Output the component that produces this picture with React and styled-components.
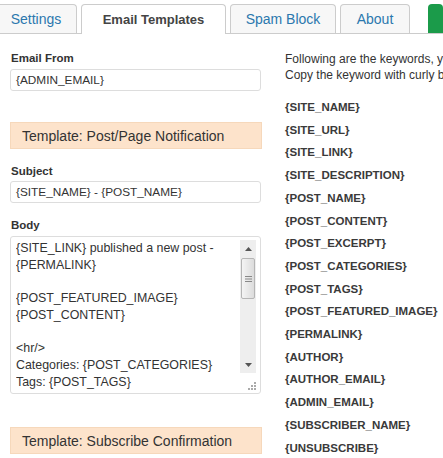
import React from 'react';
import styled, { createGlobalStyle } from 'styled-components';

const GlobalStyle = createGlobalStyle`
  html, body {
    margin: 0;
    padding: 0;
    background: #fff;
    overflow: hidden;
  }
  body {
    font-family: "Liberation Sans", Arial, sans-serif;
    color: #333;
  }
`;

const Page = styled.div`
  width: 443px;
  height: 458px;
  overflow: hidden;
  padding-top: 4px;
  box-sizing: border-box;
`;

const TabBar = styled.div`
  display: flex;
  align-items: flex-end;
  gap: 4px;
  height: 29px;
  margin-left: -5px;
  border-bottom: 1px solid #ccc;
`;

const Tab = styled.div`
  width: ${(p) => p.$w}px;
  flex: none;
  box-sizing: border-box;
  display: flex;
  align-items: center;
  justify-content: center;
  border: 1px solid #ccc;
  border-bottom: none;
  border-radius: 4px 4px 0 0;
  background: ${(p) => (p.$active ? '#fff' : '#f7f7f7')};
  color: ${(p) => (p.$active ? '#444' : '#2b77ae')};
  font-size: ${(p) => (p.$active ? '13px' : '14px')};
  font-weight: ${(p) => (p.$active ? 700 : 400)};
  margin-bottom: ${(p) => (p.$active ? '-1px' : '0')};
  height: ${(p) => (p.$active ? '30px' : '29px')};
  padding-bottom: ${(p) => (p.$active ? '1px' : '0')};
  white-space: nowrap;
`;

const GreenTab = styled.div`
  margin-left: 14px;
  width: 40px;
  height: 29px;
  background: #1b9b4a;
  border-radius: 4px 4px 0 0;
`;

const Content = styled.div`
  display: grid;
  grid-template-columns: 252px 1fr;
  column-gap: 23px;
  padding: 17px 0 0 10px;
`;

const LeftCol = styled.div`
  display: flex;
  flex-direction: column;
`;

const Label = styled.div`
  font-size: 11.5px;
  font-weight: 700;
  line-height: 15px;
  color: #333;
  padding-left: 1px;
  margin-bottom: ${(p) => p.$gap || 3}px;
`;

const Input = styled.div`
  height: 22px;
  box-sizing: border-box;
  width: 251px;
  border: 1px solid #ddd;
  border-radius: 3px;
  padding: 0 5px;
  display: flex;
  align-items: center;
  font-size: 11.8px;
  color: #333;
  margin-bottom: ${(p) => p.$after || 15}px;
`;

const TemplateHead = styled.div`
  height: 27px;
  box-sizing: border-box;
  background: #fde3cb;
  border: 1px solid #f6d8bb;
  padding-left: 11px;
  display: flex;
  align-items: center;
  font-size: 14px;
  color: #333;
  margin-bottom: 15px;
`;

const BodyBox = styled.div`
  width: 251px;
  height: 158px;
  box-sizing: border-box;
  border: 1px solid #ddd;
  border-radius: 3px;
  display: flex;
  padding: 3px 4px 1px 5px;
  margin-bottom: 33px;
`;

const BodyText = styled.div`
  flex: 1;
  white-space: pre;
  overflow: hidden;
  font-size: 12.4px;
  line-height: 16.7px;
  color: #333;
`;

const Side = styled.div`
  width: 16px;
  display: flex;
  flex-direction: column;
`;

const ScrollBar = styled.div`
  height: 133px;
  background: #eeeeee;
  display: flex;
  flex-direction: column;
  align-items: center;
`;

const Arrow = styled.div`
  height: 17px;
  width: 16px;
  display: flex;
  align-items: center;
  justify-content: center;
`;

const Track = styled.div`
  flex: 1;
  width: 100%;
  padding-top: 1px;
`;

const Thumb = styled.div`
  height: 41px;
  margin: 0 1px;
  box-sizing: border-box;
  border: 1px solid #b5b5b5;
  border-radius: 2px;
  background: linear-gradient(to right, #f4f4f4, #dcdcdc);
  display: flex;
  align-items: center;
  justify-content: center;
`;

const Grip = styled.div`
  flex: 1;
  display: flex;
  align-items: flex-end;
  justify-content: flex-end;
  padding: 0 0 2px 0;
`;

const RightCol = styled.div`
  white-space: nowrap;
  overflow: visible;
`;

const Intro = styled.p`
  margin: 0 0 13px;
  font-size: 12px;
  line-height: 16px;
  color: #333;
`;

const Keyword = styled.div`
  font-size: 11.5px;
  font-weight: 700;
  line-height: 22.7px;
  color: #3a3a3a;
`;

const keywords = [
  '{SITE_NAME}',
  '{SITE_URL}',
  '{SITE_LINK}',
  '{SITE_DESCRIPTION}',
  '{POST_NAME}',
  '{POST_CONTENT}',
  '{POST_EXCERPT}',
  '{POST_CATEGORIES}',
  '{POST_TAGS}',
  '{POST_FEATURED_IMAGE}',
  '{PERMALINK}',
  '{AUTHOR}',
  '{AUTHOR_EMAIL}',
  '{ADMIN_EMAIL}',
  '{SUBSCRIBER_NAME}',
  '{UNSUBSCRIBE}',
];

const bodyText = `{SITE_LINK} published a new post -
{PERMALINK}

{POST_FEATURED_IMAGE}
{POST_CONTENT}

<hr/>
Categories: {POST_CATEGORIES}
Tags: {POST_TAGS}`;

const App = () => {
  return (
    <Page>
      <GlobalStyle />
      <TabBar>
        <Tab $w={82}>Settings</Tab>
        <Tab $w={145} $active>Email Templates</Tab>
        <Tab $w={106}>Spam Block</Tab>
        <Tab $w={70}>About</Tab>
        <GreenTab />
      </TabBar>

      <Content>
        <LeftCol>
          <Label>Email From</Label>
          <Input $after={31}>{'{ADMIN_EMAIL}'}</Input>

          <TemplateHead>Template: Post/Page Notification</TemplateHead>

          <Label $gap={2}>Subject</Label>
          <Input>{'{SITE_NAME} - {POST_NAME}'}</Input>

          <Label>Body</Label>
          <BodyBox>
            <BodyText>{bodyText}</BodyText>
            <Side>
              <ScrollBar>
                <Arrow>
                  <svg width="7" height="4" viewBox="0 0 7 4">
                    <path d="M0 4 L3.5 0 L7 4 Z" fill="#555" />
                  </svg>
                </Arrow>
                <Track>
                  <Thumb>
                    <svg width="7" height="6" viewBox="0 0 7 6">
                      <path d="M0 0.5 H7 M0 3 H7 M0 5.5 H7" stroke="#888" strokeWidth="1" />
                    </svg>
                  </Thumb>
                </Track>
                <Arrow>
                  <svg width="7" height="4" viewBox="0 0 7 4">
                    <path d="M0 0 L3.5 4 L7 0 Z" fill="#555" />
                  </svg>
                </Arrow>
              </ScrollBar>
              <Grip>
                <svg width="9" height="9" viewBox="0 0 9 9">
                  <g fill="#aaa">
                    <rect x="7" y="1" width="2" height="2" />
                    <rect x="4" y="4" width="2" height="2" />
                    <rect x="7" y="4" width="2" height="2" />
                    <rect x="1" y="7" width="2" height="2" />
                    <rect x="4" y="7" width="2" height="2" />
                    <rect x="7" y="7" width="2" height="2" />
                  </g>
                </svg>
              </Grip>
            </Side>
          </BodyBox>

          <TemplateHead>Template: Subscribe Confirmation</TemplateHead>
        </LeftCol>

        <RightCol>
          <Intro>
            Following are the keywords, you can use in the email templates.
            <br />
            Copy the keyword with curly braces and paste it where you want.
          </Intro>
          {keywords.map((k) => (
            <Keyword key={k}>{k}</Keyword>
          ))}
        </RightCol>
      </Content>
    </Page>
  );
};

export default App;
